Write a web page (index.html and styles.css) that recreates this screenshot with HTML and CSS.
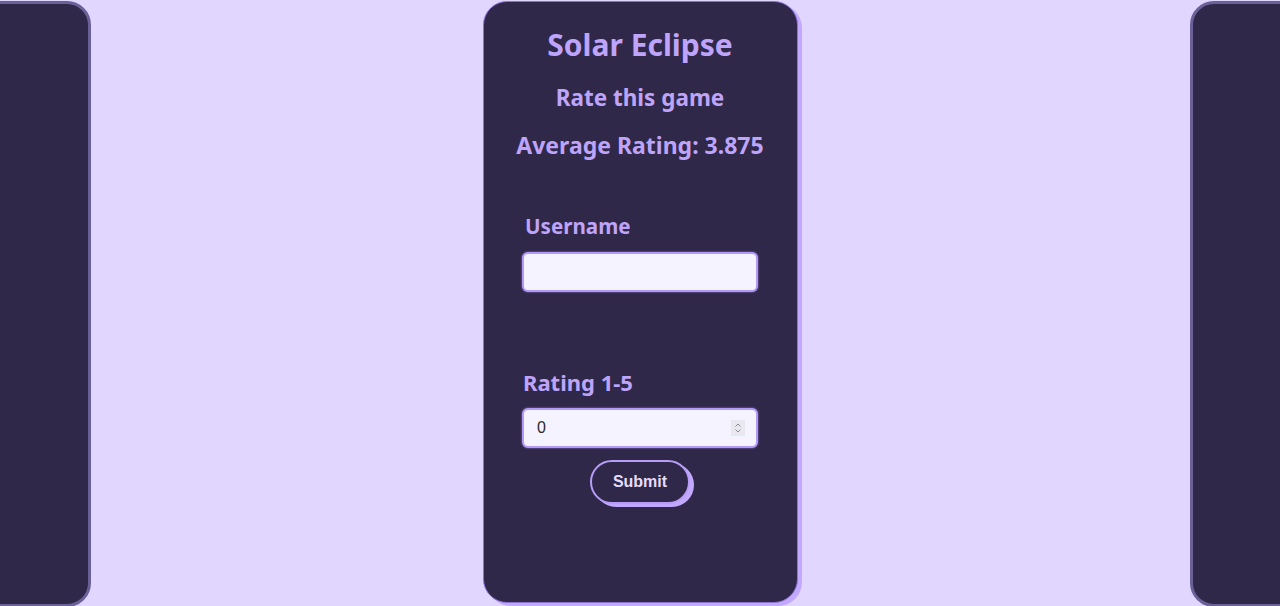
FILE: index.html
```html
<!DOCTYPE html>
<html>
<head>
<meta charset="utf-8">
<link rel="stylesheet" href="styles.css">
</head>
<body>
<div class="track">
  <div class="card side"></div>
  <div class="card main">
    <h1 class="title">Solar Eclipse</h1>
    <h2 class="sub">Rate this game</h2>
    <h2 class="avg">Average Rating: 3.875</h2>
    <form class="form">
      <label class="label label-user" for="user">Username</label>
      <input class="field" id="user" type="text">
      <label class="label label-rate" for="rate">Rating 1-5</label>
      <div class="num-wrap">
        <input class="field num" id="rate" type="number" value="0" min="0" max="5">
        <span class="spin">
          <svg width="8" height="12" viewBox="0 0 8 12"><path d="M1.5 4.5 L4 2 L6.5 4.5 M1.5 7.5 L4 10 L6.5 7.5" fill="none" stroke="#8a8a8a" stroke-width="1"/></svg>
        </span>
      </div>
      <button class="submit" type="button">Submit</button>
    </form>
  </div>
  <div class="card side"></div>
</div>
</body>
</html>
```

FILE: styles.css
```css
html, body {
  margin: 0;
  padding: 0;
  height: 100%;
  overflow: hidden;
  background: #e0d6fe;
}
.track {
  display: flex;
  justify-content: center;
  gap: 392px;
  height: 100%;
}
.card {
  flex: 0 0 auto;
  height: 600px;
  margin-top: 1px;
  border-radius: 24px;
  background: #302848;
  box-sizing: content-box;
}
.side {
  width: 309px;
  border: 3px solid #6b6199;
}
.main {
  width: 313px;
  border: 1px solid #8b73d6;
  box-shadow: 4px 3px 0 #c3a8ff;
  display: flex;
  flex-direction: column;
  align-items: center;
  font-family: "Noto Sans", sans-serif;
  color: #bea4fb;
}
.title {
  margin: 25px 0 0;
  font-size: 30px;
  line-height: 36px;
  font-weight: 700;
}
.sub {
  margin: 20px 0 0;
  font-size: 22.5px;
  line-height: 30px;
  font-weight: 700;
}
.avg {
  margin: 17px 0 0;
  font-size: 23px;
  line-height: 30px;
  font-weight: 700;
}
.form {
  display: flex;
  flex-direction: column;
  align-items: center;
  width: 236px;
  margin-top: 51px;
}
.label {
  align-self: flex-start;
  font-size: 21px;
  line-height: 30px;
  font-weight: 700;
}
.label-user { margin-left: 3px; font-size: 20.6px; }
.label-rate { margin-top: 75px; margin-left: 1px; font-size: 22px; }
.field {
  box-sizing: border-box;
  width: 236px;
  height: 40px;
  margin-top: 11px;
  padding: 0 13px;
  border: 2px solid #b29af6;
  border-radius: 6px;
  background: #f5f3ff;
  box-shadow: 0 0 2px #9b82ea;
  font-family: "Liberation Sans", Arial, sans-serif;
  font-size: 16px;
  color: #2a2a2a;
  outline: none;
}
.num-wrap {
  position: relative;
  width: 236px;
  margin-top: 11px;
}
.num {
  display: block;
  margin-top: 0;
  -moz-appearance: textfield;
}
.num::-webkit-inner-spin-button,
.num::-webkit-outer-spin-button {
  -webkit-appearance: none;
  margin: 0;
}
.spin {
  position: absolute;
  right: 13px;
  top: 12px;
  width: 14px;
  height: 16px;
  background: #e9e7ef;
  display: flex;
  align-items: center;
  justify-content: center;
}
.submit {
  margin-top: 12px;
  width: 100px;
  height: 44px;
  border: 2px solid #b79df7;
  border-radius: 22px;
  background: #302848;
  box-shadow: 4px 3px 0 #c3a8ff;
  color: #e6dcff;
  font-family: "Liberation Sans", Arial, sans-serif;
  font-size: 16px;
  font-weight: 700;
}
```
